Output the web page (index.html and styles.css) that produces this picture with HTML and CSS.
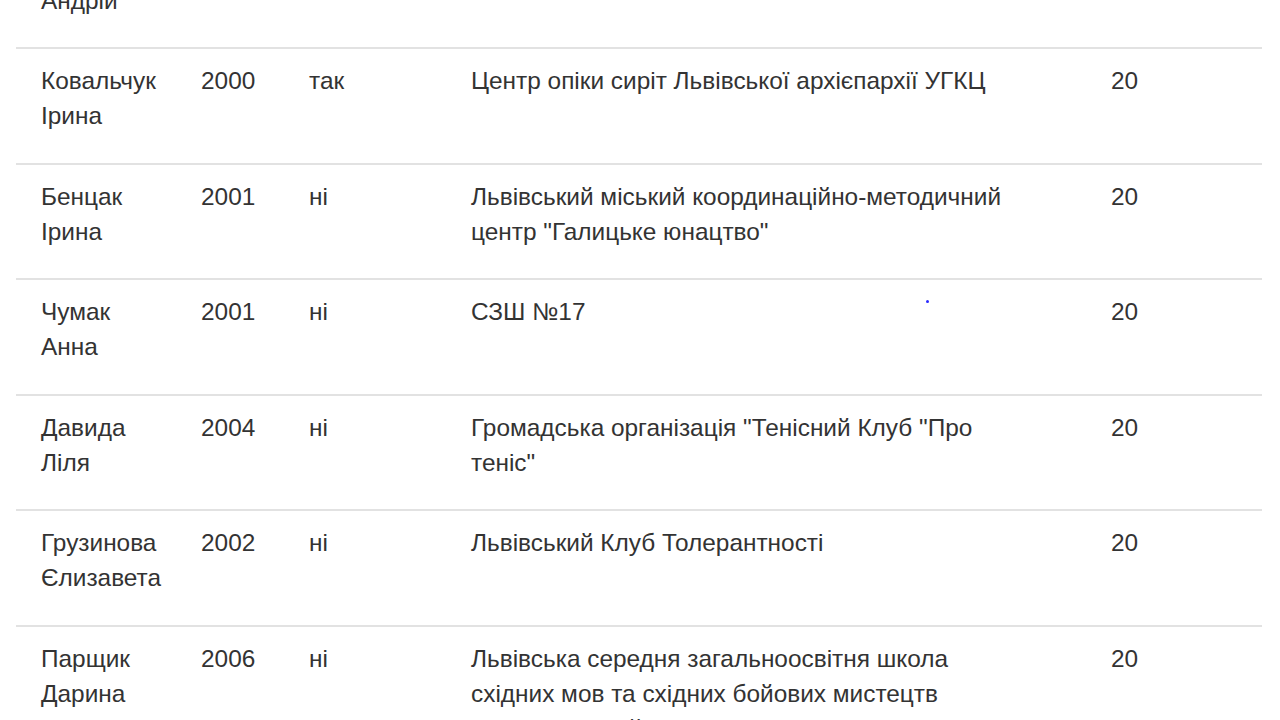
FILE: index.html
```html
<!DOCTYPE html>
<html lang="uk">
<head>
<meta charset="utf-8">
<title>Учасники</title>
<link rel="stylesheet" href="styles.css">
</head>
<body>
<div class="page">
  <div class="table" role="table">
    <div class="row" role="row">
      <div class="cell name">Ковалишин Андрій</div>
      <div class="cell">2003</div>
      <div class="cell">ні</div>
      <div class="cell org">Львівська середня загальноосвітня школа №8</div>
      <div class="cell">20</div>
    </div>
    <div class="row" role="row">
      <div class="cell name">Ковальчук Ірина</div>
      <div class="cell">2000</div>
      <div class="cell">так</div>
      <div class="cell org">Центр опіки сиріт Львівської архієпархії УГКЦ</div>
      <div class="cell">20</div>
    </div>
    <div class="row" role="row">
      <div class="cell name">Бенцак Ірина</div>
      <div class="cell">2001</div>
      <div class="cell">ні</div>
      <div class="cell org">Львівський міський координаційно-методичний центр "Галицьке юнацтво"</div>
      <div class="cell">20</div>
    </div>
    <div class="row" role="row">
      <div class="cell name">Чумак Анна</div>
      <div class="cell">2001</div>
      <div class="cell">ні</div>
      <div class="cell org">СЗШ №17</div>
      <div class="cell">20</div>
    </div>
    <div class="row" role="row">
      <div class="cell name">Давида Ліля</div>
      <div class="cell">2004</div>
      <div class="cell">ні</div>
      <div class="cell org">Громадська організація "Тенісний Клуб "Про теніс"</div>
      <div class="cell">20</div>
    </div>
    <div class="row" role="row">
      <div class="cell name">Грузинова Єлизавета</div>
      <div class="cell">2002</div>
      <div class="cell">ні</div>
      <div class="cell org">Львівський Клуб Толерантності</div>
      <div class="cell">20</div>
    </div>
    <div class="row" role="row">
      <div class="cell name">Парщик Дарина</div>
      <div class="cell">2006</div>
      <div class="cell">ні</div>
      <div class="cell org">Львівська середня загальноосвітня школа східних мов та східних бойових мистецтв "Драконівський Схід" імені</div>
      <div class="cell">20</div>
    </div>
  </div>
  <span class="dot"></span>
</div>
</body>
</html>
```

FILE: styles.css
```css
html, body {
  margin: 0;
  padding: 0;
  background: #ffffff;
}

body {
  font-family: "Liberation Sans", Arial, sans-serif;
  font-size: 24.4px;
  line-height: 35px;
  color: #333333;
  overflow: hidden;
  height: 720px;
}

.page {
  position: relative;
  display: flow-root;
  padding: 0 18px 0 16px;
}

.table {
  margin-top: -68.5px;
}

.row {
  display: grid;
  grid-template-columns: 171px 108px 162px 640px 165px;
  border-top: 2px solid #e2e2e2;
  height: 115.5px;
  box-sizing: border-box;
}

.cell {
  padding: 14px 14px 0 14px;
}

.cell.name {
  padding-left: 25px;
  padding-right: 22px;
}

.cell.org {
  padding-right: 80px;
}

.dot {
  position: absolute;
  left: 926px;
  top: 300px;
  width: 3px;
  height: 3px;
  border-radius: 50%;
  background: #2a2aff;
}
```
